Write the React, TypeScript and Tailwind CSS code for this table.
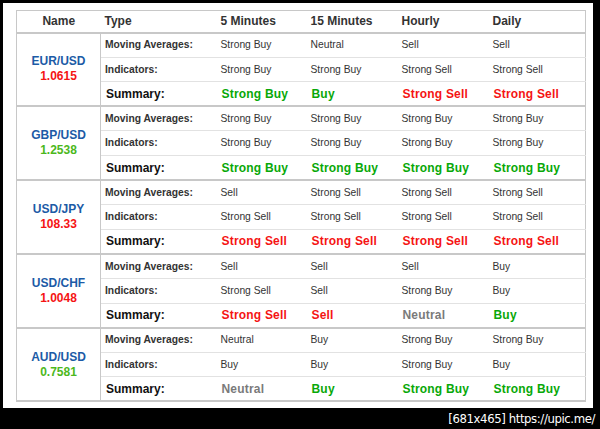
type Signal = "Strong Buy" | "Buy" | "Neutral" | "Sell" | "Strong Sell";

type Pair = {
  name: string;
  price: string;
  up: boolean;
  ma: Signal[];
  ind: Signal[];
  sum: Signal[];
};

const pairs: Pair[] = [
  {
    name: "EUR/USD",
    price: "1.0615",
    up: false,
    ma: ["Strong Buy", "Neutral", "Sell", "Sell"],
    ind: ["Strong Buy", "Strong Buy", "Strong Sell", "Strong Sell"],
    sum: ["Strong Buy", "Buy", "Strong Sell", "Strong Sell"],
  },
  {
    name: "GBP/USD",
    price: "1.2538",
    up: true,
    ma: ["Strong Buy", "Strong Buy", "Strong Buy", "Strong Buy"],
    ind: ["Strong Buy", "Strong Buy", "Strong Buy", "Strong Buy"],
    sum: ["Strong Buy", "Strong Buy", "Strong Buy", "Strong Buy"],
  },
  {
    name: "USD/JPY",
    price: "108.33",
    up: false,
    ma: ["Sell", "Strong Sell", "Strong Sell", "Strong Sell"],
    ind: ["Strong Sell", "Strong Sell", "Strong Sell", "Strong Sell"],
    sum: ["Strong Sell", "Strong Sell", "Strong Sell", "Strong Sell"],
  },
  {
    name: "USD/CHF",
    price: "1.0048",
    up: false,
    ma: ["Sell", "Sell", "Sell", "Buy"],
    ind: ["Strong Sell", "Sell", "Strong Buy", "Buy"],
    sum: ["Strong Sell", "Sell", "Neutral", "Buy"],
  },
  {
    name: "AUD/USD",
    price: "0.7581",
    up: true,
    ma: ["Neutral", "Buy", "Strong Buy", "Strong Buy"],
    ind: ["Buy", "Buy", "Strong Buy", "Buy"],
    sum: ["Neutral", "Buy", "Strong Buy", "Strong Buy"],
  },
];

function sumColor(s: Signal) {
  if (s === "Strong Buy" || s === "Buy") return "text-[#08a808]";
  if (s === "Strong Sell" || s === "Sell") return "text-[#f51414]";
  return "text-[#7a7a7a]";
}

export default function App() {
  return (
    <div className="w-[600px] h-[429px] bg-black flex flex-col font-['Liberation_Sans',Arial,sans-serif]">
      <div className="ml-[3px] mt-[3px] w-[590px] h-[405px] bg-white pl-[13px] pt-[7px]">
        <table className="w-[569px] table-fixed border-collapse border border-[#c8c8c8] text-[10.3px] text-[#333]">
          <colgroup>
            <col className="w-[84px]" />
            <col className="w-[116px]" />
            <col className="w-[90px]" />
            <col className="w-[91px]" />
            <col className="w-[91px]" />
            <col className="w-[97px]" />
          </colgroup>
          <thead>
            <tr className="h-[22px] border-b-2 border-[#c8c8c8] text-[12px] font-bold text-[#333]">
              <th className="text-center font-bold">Name</th>
              <th className="pl-[4px] text-left font-bold">Type</th>
              <th className="pl-[4px] text-left font-bold">5 Minutes</th>
              <th className="pl-[4px] text-left font-bold">15 Minutes</th>
              <th className="pl-[4px] text-left font-bold">Hourly</th>
              <th className="pl-[4px] text-left font-bold">Daily</th>
            </tr>
          </thead>
          {pairs.map((p) => (
            <tbody key={p.name} className="border-b-2 border-[#c8c8c8]">
              <tr className="h-[24.6px] border-b border-[#e2e2e2]">
                <td rowSpan={3} className="text-center align-middle border-r border-[#c8c8c8] font-bold text-[12px] leading-[15px]">
                  <div className="text-[#1c5ba6]">{p.name}</div>
                  <div className={p.up ? "text-[#4cb81c]" : "text-[#f51414]"}>{p.price}</div>
                </td>
                <td className="pl-[4px] font-bold">Moving Averages:</td>
                {p.ma.map((s, i) => (
                  <td key={i} className="pl-[4px]">{s}</td>
                ))}
              </tr>
              <tr className="h-[24.6px] border-b border-[#e2e2e2]">
                <td className="pl-[4px] font-bold">Indicators:</td>
                {p.ind.map((s, i) => (
                  <td key={i} className="pl-[4px]">{s}</td>
                ))}
              </tr>
              <tr className="h-[24.6px]">
                <td className="pl-[5px] font-bold text-[12px] text-[#111]">Summary:</td>
                {p.sum.map((s, i) => (
                  <td key={i} className={`pl-[5px] font-bold text-[12px] tracking-[0.2px] ${sumColor(s)}`}>{s}</td>
                ))}
              </tr>
            </tbody>
          ))}
        </table>
      </div>
      <div className="flex-1 flex items-center justify-end pr-[5px] text-white text-[13px] tracking-[-0.4px] font-['DejaVu_Sans_Condensed','DejaVu_Sans',sans-serif]">
        [681x465] https://upic.me/
      </div>
    </div>
  );
}
